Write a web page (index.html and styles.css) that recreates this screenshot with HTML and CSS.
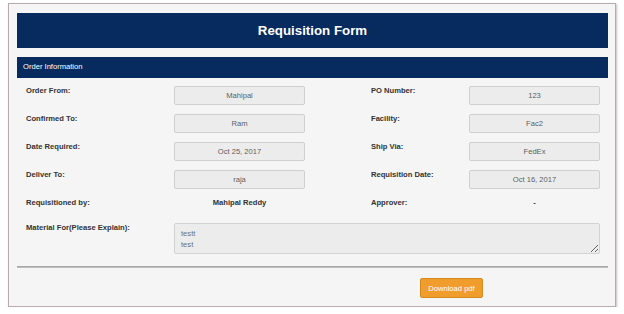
FILE: index.html
```html
<!DOCTYPE html>
<html>
<head>
<meta charset="utf-8">
<link rel="stylesheet" href="styles.css">
</head>
<body>
<div class="panel">
  <div class="title-bar">Requisition Form</div>
  <div class="sub-bar">Order Information</div>
  <div class="form">
    <div class="row">
      <div class="label">Order From:</div>
      <div class="field">Mahipal</div>
      <div class="spacer"></div>
      <div class="label">PO Number:</div>
      <div class="field">123</div>
    </div>
    <div class="row">
      <div class="label">Confirmed To:</div>
      <div class="field">Ram</div>
      <div class="spacer"></div>
      <div class="label">Facility:</div>
      <div class="field">Fac2</div>
    </div>
    <div class="row">
      <div class="label">Date Required:</div>
      <div class="field">Oct 25, 2017</div>
      <div class="spacer"></div>
      <div class="label">Ship Via:</div>
      <div class="field">FedEx</div>
    </div>
    <div class="row">
      <div class="label">Deliver To:</div>
      <div class="field">raja</div>
      <div class="spacer"></div>
      <div class="label">Requisition Date:</div>
      <div class="field">Oct 16, 2017</div>
    </div>
    <div class="row row-short">
      <div class="label">Requisitioned by:</div>
      <div class="value">Mahipal Reddy</div>
      <div class="spacer"></div>
      <div class="label">Approver:</div>
      <div class="value">-</div>
    </div>
    <div class="row row-text">
      <div class="label">Material For(Please Explain):</div>
      <textarea class="area" readonly>testt
test</textarea>
    </div>
  </div>
  <hr class="rule">
  <div class="actions">
    <button class="btn">Download pdf</button>
  </div>
</div>
</body>
</html>
```
FILE: styles.css
```css
html, body {
  margin: 0;
  padding: 0;
  background: #ffffff;
}
body {
  font-family: "Liberation Sans", Arial, sans-serif;
  padding: 3px 8px 0 8px;
}
.panel {
  width: 608px;
  box-sizing: border-box;
  height: 304px;
  border: 1px solid #b9abab;
  background: #f5f5f5;
  box-shadow: 1px 1px 2px rgba(90, 70, 70, 0.35);
  padding: 9px 7px 0 8px;
}
.title-bar {
  height: 35px;
  background: #072a5f;
  color: #ffffff;
  font-weight: bold;
  font-size: 13.3px;
  line-height: 36px;
  text-align: center;
}
.sub-bar {
  margin-top: 9px;
  height: 21px;
  background: #072a5f;
  color: #ffffff;
  font-size: 7.6px;
  line-height: 20px;
  padding-left: 6px;
}
.form {
  margin-top: 8px;
  padding-left: 9px;
}
.row {
  display: grid;
  grid-template-columns: 148px 131px 66px 98px 131px;
  height: 28px;
}
.row-short {
  height: 25px;
}
.row-text {
  grid-template-columns: 148px 426px;
  height: 31px;
}
.label {
  font-weight: bold;
  font-size: 7.6px;
  line-height: 10px;
  color: #333333;
}
.field {
  box-sizing: border-box;
  height: 19px;
  border: 1px solid #cfcfcf;
  border-radius: 2px;
  background: #ececec;
  color: #5e5e5e;
  font-size: 7.6px;
  line-height: 17px;
  text-align: center;
}
.value {
  font-weight: bold;
  font-size: 7.6px;
  line-height: 10px;
  color: #333333;
  text-align: center;
}
.area {
  box-sizing: border-box;
  width: 426px;
  height: 31px;
  margin: 0;
  border: 1px solid #d2d2d2;
  border-radius: 2px;
  background: #ececec;
  color: #6e6e6e;
  font-family: "Liberation Sans", Arial, sans-serif;
  font-size: 7.6px;
  line-height: 11px;
  padding: 4px 6px;
  resize: vertical;
  overflow: hidden;
}
.rule {
  margin: 12px 0 0 0;
  border: 0;
  height: 2px;
  background: linear-gradient(#9c9c9c, #c8c8c8);
}
.actions {
  display: flex;
  justify-content: flex-start;
  padding-top: 10px;
  padding-left: 403px;
}
.btn {
  width: 63px;
  height: 20px;
  padding: 0;
  border: 1px solid #d58a1c;
  border-radius: 2px;
  background: #f09d2e;
  color: #ffffff;
  font-family: "Liberation Sans", Arial, sans-serif;
  font-size: 7.6px;
}
```
